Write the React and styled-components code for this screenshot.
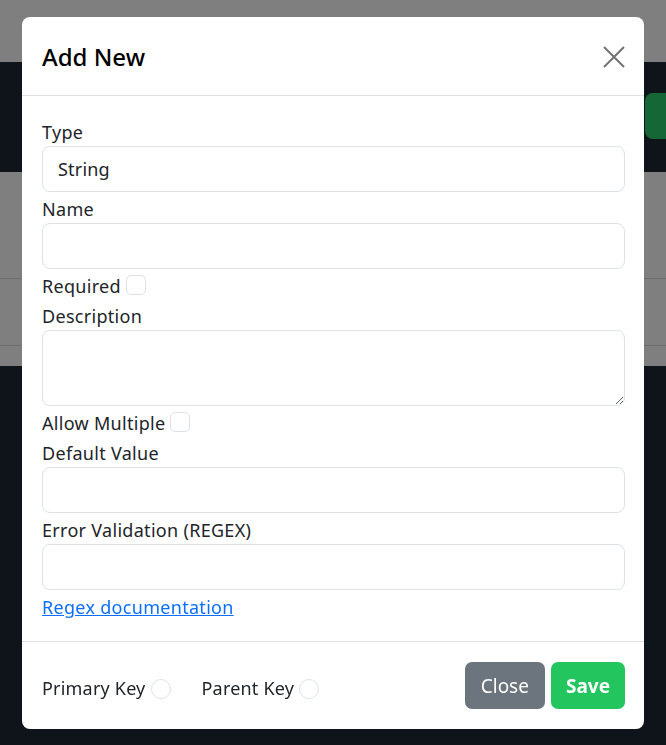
import styled, { createGlobalStyle } from "styled-components";

const GlobalStyle = createGlobalStyle`
  html, body {
    margin: 0;
    padding: 0;
    background-color: #1f2937;
    overflow: hidden;
  }
  body {
    font-family: "Noto Sans", "Open Sans", sans-serif;
    color: #212529;
  }
  * {
    box-sizing: border-box;
  }
`;

/* page behind the backdrop */
const Page = styled.div`
  min-height: 100vh;
  background-color: #1f2937;
`;
const TopBar = styled.div`
  height: 62px;
  background-color: #ffffff;
`;
const NavBar = styled.div`
  height: 110px;
  display: flex;
  justify-content: flex-end;
  align-items: center;
  background-color: #1f2937;
  overflow: hidden;
`;
const AddButton = styled.div`
  width: 90px;
  height: 46px;
  margin-right: -69px;
  margin-top: -2px;
  border-radius: 8px;
  background-color: #2bd06a;
`;
const Table = styled.div`
  background-color: #ffffff;
`;
const TableRow = styled.div`
  height: ${(props) => props.h}px;
  border-bottom: ${(props) => (props.last ? "none" : "1px solid #dcdcdc")};
`;

/* modal */
const Backdrop = styled.div`
  position: fixed;
  inset: 0;
  background-color: rgba(0, 0, 0, 0.5);
`;
const ModalWrap = styled.div`
  position: fixed;
  inset: 0;
  padding: 17px 22px;
`;
const Dialog = styled.div`
  background-color: #ffffff;
  border-radius: 8px;
  display: flex;
  flex-direction: column;
`;
const Header = styled.div`
  height: 79px;
  padding: 0 20px;
  display: flex;
  align-items: center;
  justify-content: space-between;
  border-bottom: 1px solid #dee2e6;
`;
const Title = styled.h5`
  margin: 0;
  font-size: 24px;
  font-weight: 500;
  line-height: 36px;
  color: #000000;
  padding-top: 2px;
`;
const CloseX = styled.button`
  width: 22px;
  height: 22px;
  padding: 0;
  margin-right: -1px;
  margin-top: 2px;
  border: none;
  background: transparent;
  color: #000000;
  opacity: 0.55;
  display: flex;
`;
const Body = styled.div`
  padding: 23px 19px 20px 20px;
  display: flex;
  flex-direction: column;
  border-bottom: 1px solid #dee2e6;
`;
const Label = styled.label`
  display: block;
  font-size: 18px;
  line-height: 27px;
  letter-spacing: 0.3px;
`;
const Input = styled.input`
  display: block;
  width: 100%;
  height: 46px;
  margin-bottom: 4px;
  padding: 0 15px;
  font-family: inherit;
  font-size: 18px;
  letter-spacing: 0.2px;
  color: #212529;
  border: 1px solid #dee2e6;
  border-radius: 8px;
  background-color: #ffffff;
  outline: none;
`;
const TextArea = styled.textarea`
  display: block;
  width: 100%;
  height: 76px;
  margin-bottom: 4px;
  padding: 8px 15px;
  font-family: inherit;
  font-size: 18px;
  border: 1px solid #dee2e6;
  border-radius: 8px;
  outline: none;
`;
const CheckRow = styled.div`
  display: flex;
  align-items: flex-start;
  gap: 5px;
  height: 27px;
  margin-bottom: 3px;
`;
const Check = styled.input`
  appearance: none;
  flex-shrink: 0;
  width: 20px;
  height: 20px;
  margin: 2px 0 0 0;
  border: 1px solid #dee2e6;
  border-radius: ${(props) => (props.type === "radio" ? "50%" : "5px")};
  background-color: #ffffff;
`;
const DocLink = styled.a`
  display: block;
  font-size: 18px;
  line-height: 27px;
  letter-spacing: 0.3px;
  color: #0d6efd;
  text-decoration: underline;
  width: fit-content;
`;
const Footer = styled.div`
  padding: 20px 19px 20px 20px;
  display: flex;
  align-items: center;
  justify-content: space-between;
`;
const Keys = styled.div`
  display: flex;
  gap: 31px;
  padding-top: 6px;
`;
const KeyItem = styled.div`
  display: flex;
  align-items: center;
  gap: 5px;
  font-size: 18px;
  line-height: 27px;
  letter-spacing: 0.2px;
  & > input {
    margin-top: 1px;
  }
`;
const Buttons = styled.div`
  display: flex;
  gap: 6px;
`;
const Button = styled.button`
  height: 47px;
  padding: 0 ${(props) => (props.bold ? 15 : 16)}px;
  font-family: inherit;
  font-size: 19px;
  font-weight: ${(props) => (props.bold ? 700 : 400)};
  color: #ffffff;
  border: none;
  border-radius: 7px;
  background-color: ${(props) => props.bg};
`;

const App = () => {
  return (
    <>
      <GlobalStyle />
      <Page>
        <TopBar />
        <NavBar>
          <AddButton />
        </NavBar>
        <Table>
          <TableRow h={107} />
          <TableRow h={67} />
          <TableRow h={20} last />
        </Table>
      </Page>
      <Backdrop />
      <ModalWrap>
        <Dialog>
          <Header>
            <Title>Add New</Title>
            <CloseX aria-label="Close">
              <svg width="22" height="22" viewBox="0 0 22 22">
                <path
                  d="M1 1 L21 21 M21 1 L1 21"
                  stroke="currentColor"
                  strokeWidth="2"
                  fill="none"
                />
              </svg>
            </CloseX>
          </Header>
          <Body>
            <Label>Type</Label>
            <Input defaultValue="String" readOnly />
            <Label>Name</Label>
            <Input />
            <CheckRow>
              <Label>Required</Label>
              <Check type="checkbox" />
            </CheckRow>
            <Label>Description</Label>
            <TextArea />
            <CheckRow>
              <Label>Allow Multiple</Label>
              <Check type="checkbox" />
            </CheckRow>
            <Label>Default Value</Label>
            <Input />
            <Label>Error Validation (REGEX)</Label>
            <Input />
            <DocLink href="#">Regex documentation</DocLink>
          </Body>
          <Footer>
            <Keys>
              <KeyItem>
                Primary Key
                <Check type="radio" name="primary" />
              </KeyItem>
              <KeyItem>
                Parent Key
                <Check type="radio" name="parent" />
              </KeyItem>
            </Keys>
            <Buttons>
              <Button bg="#6c757d">Close</Button>
              <Button bg="#22c55e" bold>
                Save
              </Button>
            </Buttons>
          </Footer>
        </Dialog>
      </ModalWrap>
    </>
  );
};

export default App;
